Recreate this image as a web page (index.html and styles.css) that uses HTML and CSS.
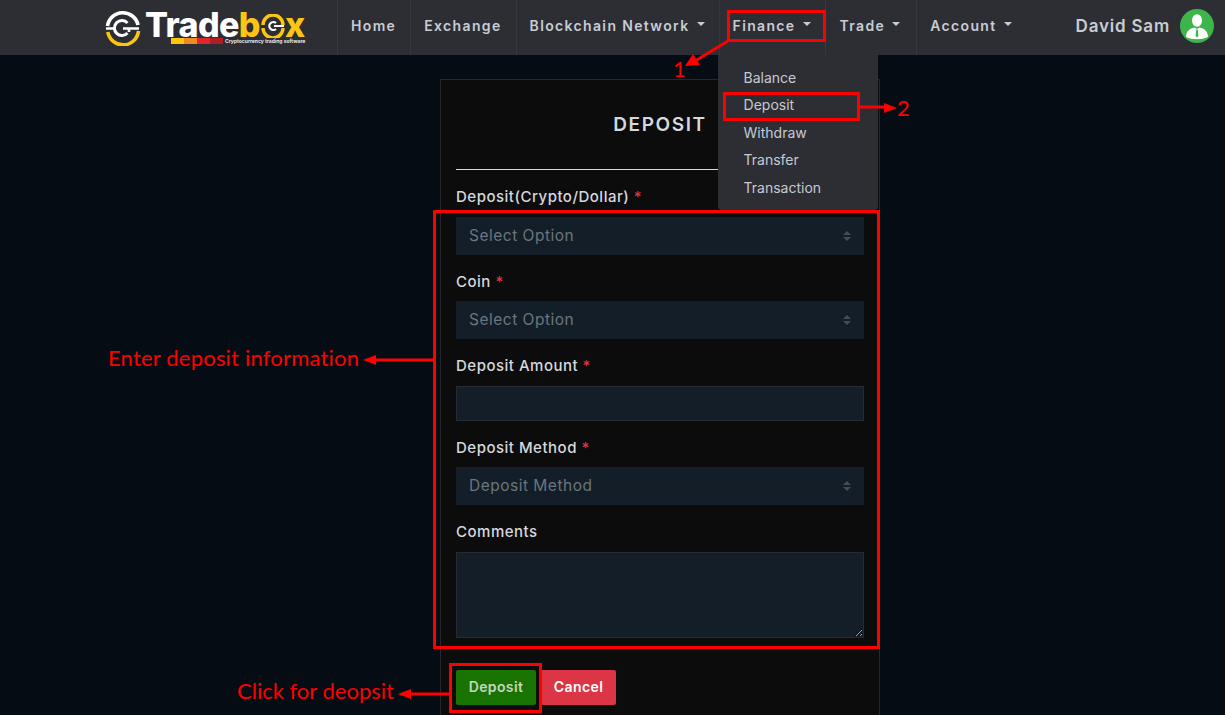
FILE: index.html
```html
<!DOCTYPE html>
<html lang="en">
<head>
    <meta charset="UTF-8">
    <meta name="viewport" content="width=device-width, initial-scale=1.0">
    <title>Tradebox - Deposit</title>
    <link rel="stylesheet" href="styles.css">
</head>
<body>
    <header class="topbar">
        <a class="logo" href="#">
            <svg class="logo-mark" viewBox="0 0 36 36" width="36" height="36" fill="none">
                <path d="M2.500 16A15.500 15.500 0 0 1 33 15" stroke="#fff" stroke-width="3.600"/>
                <path d="M33.500 21A15.500 15.500 0 0 1 2.800 22" stroke="#fbc512" stroke-width="3.600"/>
                <path d="M22.500 13A7.500 7.500 0 1 0 22.500 23" stroke="#fff" stroke-width="3"/>
                <path d="M1 18.500H10M18 18.500H24V22M24 18.500H34" stroke="#fff" stroke-width="2.600"/>
            </svg>
            <span class="logo-type">
                <span class="logo-name">Trade<span class="logo-accent">b<svg class="logo-o" viewBox="0 0 24 24" width="24" height="24" fill="none"><path d="M2 11A10 10 0 0 1 22 11" stroke="#fbc512" stroke-width="3.400"/><path d="M22 14A10 10 0 0 1 2 14" stroke="#fbc512" stroke-width="3.400"/><path d="M15 9A4 4 0 1 0 15 15" stroke="#fff" stroke-width="2.200"/><path d="M13 12H23" stroke="#fff" stroke-width="2"/></svg>x</span></span>
                <span class="logo-sub">
                    <span class="logo-bar"><i class="bar-a"></i><i class="bar-b"></i><i class="bar-c"></i><i class="bar-d"></i></span>
                    <span class="logo-tag">Cryptocurrency trading software</span>
                </span>
            </span>
        </a>
        <nav class="nav">
            <a class="nav-link" href="#">Home</a>
            <a class="nav-link" href="#">Exchange</a>
            <a class="nav-link caret" href="#">Blockchain Network</a>
            <div class="nav-item">
                <a class="nav-link caret" href="#">Finance</a>
                <div class="dropdown">
                    <a href="#">Balance</a>
                    <a href="#">Deposit</a>
                    <a href="#">Withdraw</a>
                    <a href="#">Transfer</a>
                    <a href="#">Transaction</a>
                </div>
            </div>
            <a class="nav-link caret nav-trade" href="#">Trade</a>
            <a class="nav-link caret" href="#">Account</a>
        </nav>
        <div class="user">
            <span class="user-name">David Sam</span>
            <svg class="avatar" viewBox="0 0 34 34" width="34" height="34">
                <circle cx="17" cy="17" r="17" fill="#3db54a"/>
                <ellipse cx="17" cy="11.500" rx="5" ry="6.200" fill="#fff"/>
                <path d="M6 28C6 22 10 19.500 14.500 18.500L17 20L19.500 18.500C24 19.500 28 22 28 28C22 31 12 31 6 28Z" fill="#fff"/>
                <path d="M16.200 20.500H17.800L18.400 27L17 28.500L15.600 27Z" fill="#3db54a"/>
            </svg>
        </div>
    </header>

    <main class="page">
        <form class="card">
            <h2 class="card-title">DEPOSIT</h2>
            <hr class="card-rule">

            <label class="field-label">Deposit(Crypto/Dollar) <b>*</b></label>
            <div class="select-wrap">
                <select class="control"><option>Select Option</option></select>
                <svg class="updown" viewBox="0 0 8 10" width="8" height="10"><path d="M4 0L8 4H0ZM4 10L0 6H8Z"/></svg>
            </div>

            <label class="field-label">Coin <b>*</b></label>
            <div class="select-wrap">
                <select class="control"><option>Select Option</option></select>
                <svg class="updown" viewBox="0 0 8 10" width="8" height="10"><path d="M4 0L8 4H0ZM4 10L0 6H8Z"/></svg>
            </div>

            <label class="field-label">Deposit Amount <b>*</b></label>
            <div class="select-wrap">
                <input class="control control-input" type="text">
            </div>

            <label class="field-label">Deposit Method <b>*</b></label>
            <div class="select-wrap">
                <select class="control"><option>Deposit Method</option></select>
                <svg class="updown" viewBox="0 0 8 10" width="8" height="10"><path d="M4 0L8 4H0ZM4 10L0 6H8Z"/></svg>
            </div>

            <label class="field-label">Comments</label>
            <div class="select-wrap">
                <textarea class="control control-area"></textarea>
            </div>

            <div class="actions">
                <button class="btn btn-deposit" type="button">Deposit</button>
                <button class="btn btn-cancel" type="button">Cancel</button>
            </div>
        </form>
    </main>

    <!-- red markup drawn on top of the screenshot -->
    <div class="markup">
        <div class="mark-box box-finance"></div>
        <div class="mark-box box-deposit"></div>
        <div class="mark-box box-form"></div>
        <div class="mark-box box-button"></div>
        <svg class="mark-arrows" viewBox="0 0 1225 715" width="1225" height="715">
            <g stroke="#f00" stroke-width="3" fill="none">
                <path d="M728 41L695 61"/>
                <path d="M859 107H885"/>
                <path d="M433 360H375"/>
                <path d="M449 694H410"/>
            </g>
            <g fill="#f00">
                <path d="M685 66L693 54L700 65Z"/>
                <path d="M897 108L884 103V113Z"/>
                <path d="M363 360L376 355V365Z"/>
                <path d="M398 694L411 689V699Z"/>
            </g>
        </svg>
        <span class="mark-text num-one">1</span>
        <span class="mark-text num-two">2</span>
        <span class="mark-text note-enter">Enter deposit information</span>
        <span class="mark-text note-click">Click for deopsit</span>
    </div>
</body>
</html>
```

FILE: styles.css
```css
html, body {
    margin: 0;
    height: 100%;
    overflow: hidden;
}
body {
    position: relative;
    font-family: Inter, "Open Sans", sans-serif;
    background-color: #050c14;
    color: #d6d8dc;
}
a {
    color: inherit;
    text-decoration: none;
}

/* top bar */
.topbar {
    display: flex;
    align-items: stretch;
    height: 55px;
    padding-left: 105px;
    padding-right: 11px;
    background-color: #2d2e33;
    box-sizing: border-box;
}
.logo {
    display: flex;
    align-items: center;
    width: 232px;
    flex-shrink: 0;
    gap: 4px;
}
.logo-mark {
    flex-shrink: 0;
}
.logo-type {
    display: flex;
    flex-direction: column;
}
.logo-name {
    display: flex;
    align-items: center;
    height: 27px;
    font-size: 34px;
    line-height: 27px;
    font-weight: 800;
    color: #fff;
    letter-spacing: -0.6px;
}
.logo-accent {
    display: inline-flex;
    align-items: center;
    color: #fbc512;
}
.logo-o {
    margin: 3px 0 0 1px;
}
.logo-sub {
    display: flex;
    align-items: center;
    gap: 2px;
    margin-left: 26px;
}
.logo-bar {
    display: flex;
    width: 52px;
    height: 6px;
}
.logo-bar i {
    flex: 1;
}
.bar-a { background-color: #fbc512; }
.bar-b { background-color: #f08a24; }
.bar-c { background-color: #e0252b; }
.bar-d { background-color: #b01e24; }
.logo-tag {
    font-size: 5px;
    font-weight: 700;
    color: #e8e8e8;
    white-space: nowrap;
}

.nav {
    display: flex;
    align-items: stretch;
}
.nav-item {
    position: relative;
    display: flex;
}
.nav-link {
    display: flex;
    align-items: center;
    padding: 0 14px 5px 13px;
    border-left: 1px solid #37383d;
    font-size: 14px;
    font-weight: 600;
    letter-spacing: 1.35px;
    color: #c8ccd4;
    white-space: nowrap;
}
.nav-trade {
    padding-left: 14px;
    padding-right: 16px;
}
.caret::after {
    content: "";
    width: 0;
    height: 0;
    margin-left: 7px;
    margin-bottom: 3px;
    border-top: 4px solid #c8ccd4;
    border-left: 4px solid transparent;
    border-right: 4px solid transparent;
}
.dropdown {
    position: absolute;
    top: 55px;
    left: -1px;
    width: 160px;
    height: 155px;
    padding-top: 8.500px;
    box-sizing: border-box;
    background-color: #2d2e33;
    border-radius: 0 0 4px 4px;
    z-index: 2;
}
.dropdown a {
    display: block;
    height: 27.500px;
    line-height: 27.500px;
    padding-left: 26px;
    font-size: 14px;
    color: #c5cad3;
}
.user {
    display: flex;
    align-items: center;
    gap: 10px;
    margin-left: auto;
}
.user-name {
    margin-top: -3px;
    font-size: 17px;
    font-weight: 600;
    letter-spacing: 0.8px;
    color: #c8ccd4;
}
.avatar {
    margin-top: -3px;
}

/* form */
.page {
    display: flex;
    height: calc(100vh - 55px);
    padding-top: 24px;
    padding-left: 440px;
    box-sizing: border-box;
}
.card {
    width: 440px;
    flex-shrink: 0;
    padding: 0 15px;
    box-sizing: border-box;
    overflow: hidden;
    background-color: #0c0c0c;
    border: 1px solid #26282c;
    border-bottom: 0;
}
.card-title {
    margin: 33px 0 0;
    height: 24px;
    line-height: 24px;
    text-align: center;
    font-size: 19px;
    font-weight: 600;
    letter-spacing: 1.6px;
    color: #d6d8dc;
}
.card-rule {
    height: 1px;
    margin: 32px 0 14px;
    border: 0;
    background-color: #d6d8dc;
}
.field-label {
    display: block;
    height: 24px;
    line-height: 26px;
    margin-bottom: 8.500px;
    font-size: 15px;
    font-weight: 500;
    letter-spacing: 0.5px;
    color: #d6d8dc;
}
.field-label b {
    color: #dc3545;
    font-weight: 500;
}
.select-wrap {
    position: relative;
    margin-bottom: 14px;
}
.control {
    display: block;
    width: 100%;
    height: 38px;
    padding: 0 13px 1px;
    box-sizing: border-box;
    border: 0;
    border-radius: 0;
    appearance: none;
    background-color: #141e29;
    font-family: inherit;
    font-size: 15.500px;
    letter-spacing: 0.5px;
    color: #6c757d;
}
.control-input {
    height: 35px;
    border: 1px solid #252c36;
}
.control-area {
    height: 86px;
    border: 1px solid #252c36;
    resize: both;
}
.updown {
    position: absolute;
    top: 14px;
    right: 13px;
    fill: #454c56;
}
.actions {
    display: flex;
    gap: 5px;
    margin-top: 32.500px;
}
.btn {
    height: 35px;
    padding: 0 0 2px;
    border: 0;
    border-radius: 2px;
    font-family: inherit;
    font-size: 14px;
    font-weight: 600;
    letter-spacing: 0.4px;
    cursor: pointer;
}
.btn-deposit {
    width: 80px;
    background-color: #197300;
    color: #c6d6c0;
}
.btn-cancel {
    width: 75px;
    background-color: #dc3545;
    color: #fff;
}

/* annotations */
.markup {
    position: absolute;
    top: 0;
    left: 0;
    width: 1225px;
    height: 715px;
    z-index: 5;
    pointer-events: none;
}
.mark-arrows {
    position: absolute;
    top: 0;
    left: 0;
}
.mark-box {
    position: absolute;
    box-sizing: border-box;
    border: 3px solid #f00;
}
.box-finance { left: 727px; top: 10px; width: 99px; height: 32px; }
.box-deposit { left: 723px; top: 92px; width: 137px; height: 29px; }
.box-form { left: 433px; top: 210px; width: 447px; height: 439px; }
.box-button { left: 449px; top: 663px; width: 93px; height: 50px; }
.mark-text {
    position: absolute;
    font-family: Lato, "Open Sans", sans-serif;
    font-size: 22px;
    line-height: 26px;
    color: #f00;
    white-space: nowrap;
}
.num-one { left: 673px; top: 56px; }
.num-two { left: 897px; top: 95px; }
.note-enter { left: 108px; top: 345px; letter-spacing: 0.2px; }
.note-click { left: 237px; top: 678px; }
```
